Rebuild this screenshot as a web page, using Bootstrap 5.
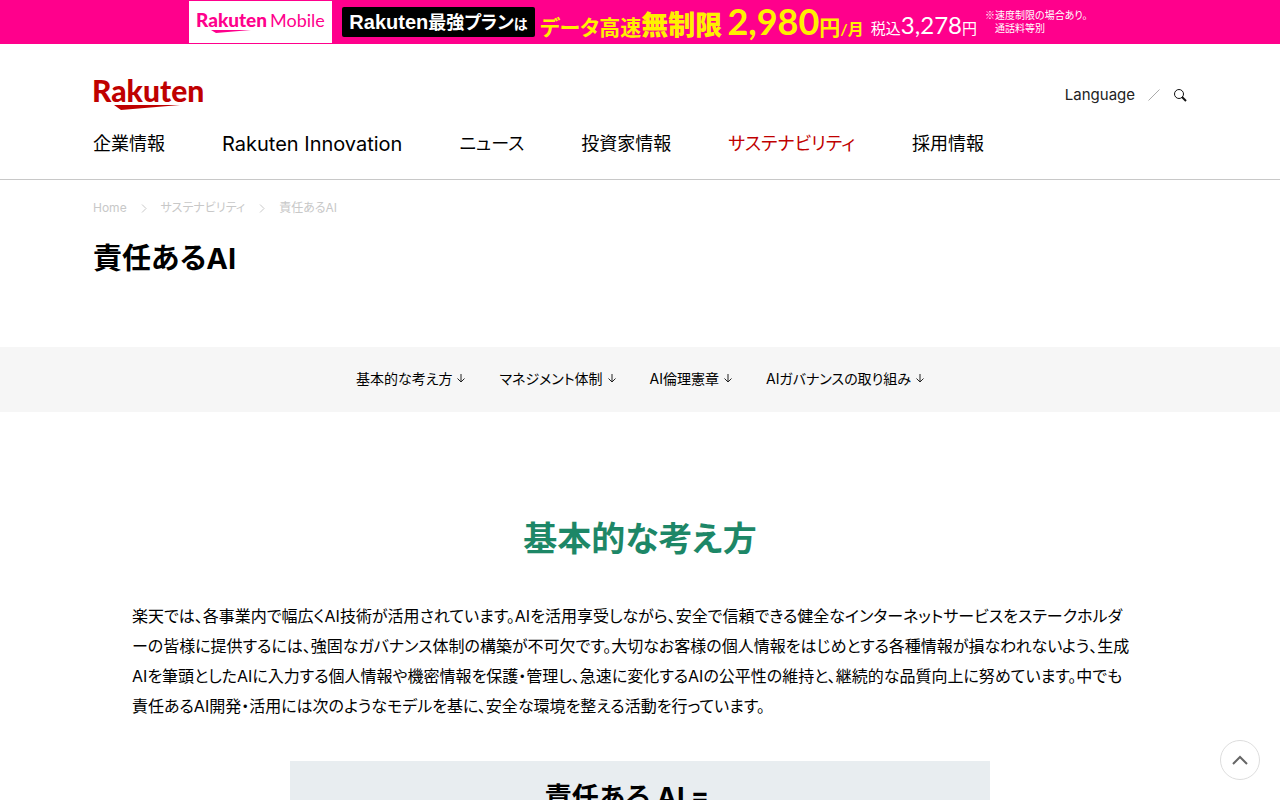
<!DOCTYPE html>
<html lang="ja">
<head>
<meta charset="utf-8">
<meta name="viewport" content="width=device-width, initial-scale=1">
<title>責任あるAI</title>
<link href="https://cdn.jsdelivr.net/npm/bootstrap@5.3.0/dist/css/bootstrap.min.css" rel="stylesheet">
<style>
body{font-family:"Inter","Noto Sans CJK JP",sans-serif;color:#000;background:#fff;font-feature-settings:"palt"}
a{color:inherit;text-decoration:none}
.promo{background:#ff008c;height:44px;color:#fff;line-height:1;white-space:nowrap;overflow:hidden;font-family:"Lato","Noto Sans CJK JP",sans-serif}
.promo-in{width:902px;height:44px}
.promo-logo{width:143px;height:42px;background:#fff;flex:none}
.promo-plan{background:#000;border-radius:2px;width:193px;height:30px;font-weight:700;font-size:18px;line-height:30px;flex:none;margin:0 5px 0 10px}
.promo-plan b{font-size:20px;font-family:"Liberation Sans",sans-serif}
.promo-plan .t14{font-size:14px}
.promo-text{height:44px;line-height:42px}
.yel{color:#fff000;font-weight:700}
.t16{font-size:16px}.t21{font-size:21px}.t27{font-size:27px;font-weight:900}.t36{font-size:36px}.t24{font-size:24px}
.promo-text.t16{font-size:15px;line-height:50px;margin-left:7px}
.promo-note{font-size:10px;line-height:13px}
.wrap{max-width:1280px;padding:0 93px;margin:0 auto}
.site-head{min-height:136px;border-bottom:1px solid #c8c8c8;padding-top:34px}
.tools{font-size:15px;line-height:22px;color:#222}
.tools .slash{margin:0 13px}
.gnav{gap:57px;font-size:18px;line-height:28px;margin-top:18px}
.gnav .en{font-size:20px}
.current{color:#bf0000}
.crumbs{font-size:12px;line-height:18px;color:#c8c8c8;gap:14px;padding-top:19px}
.page-title{font-size:29px;line-height:40px;font-weight:700;margin:22px 0 68px}
.local{background:#f6f6f6;min-height:65px;gap:34px;font-size:14px;line-height:20px;padding-bottom:2px}
.local a{display:flex;align-items:center;gap:5px}
.section-title{font-size:34px;line-height:50px;font-weight:700;color:#1d8767;margin:102px 0 37px}
.copy{max-width:1016px;font-size:16px;line-height:30px;margin:0 auto 40px}
.model{max-width:700px;background:#e8edf0;min-height:79px;padding:18px 26px 0 0;font-size:27px;line-height:38px;font-weight:700}
.to-top{position:fixed;right:20px;bottom:20px;width:40px;height:40px;border:1px solid #ddd;border-radius:50%;background:#fff;padding:0}
</style>
</head>
<body>
<a href="#" class="promo d-flex justify-content-center">
<span class="promo-in d-flex align-items-center">
<span class="promo-logo d-flex align-items-center justify-content-center"><svg width="130" height="28" viewBox="0 0 130 28" fill="#ff008c"><text x="0" y="19" font-family="Lato" font-weight="900" font-size="19">Rakuten</text><text x="74" y="19" font-family="Lato" font-size="18">Mobile</text><path d="M15 22h40L20 25z"/></svg></span>
<span class="promo-plan text-center"><b>Rakuten</b>最強プラン<span class="t14">は</span></span>
<span class="promo-text yel t21">データ高速<span class="t27">無制限</span> <span class="t36">2,980</span>円<span class="t16">/月</span></span>
<span class="promo-text t16">税込<span class="t24">3,278</span>円</span>
<span class="promo-note ms-2">※速度制限の場合あり。<br>　通話料等別</span>
</span>
</a>
<header class="site-head">
<div class="wrap">
<div class="d-flex justify-content-between align-items-center">
<a href="#" aria-label="Rakuten"><svg class="d-block" width="120" height="34" viewBox="0 0 120 34" fill="#bf0000"><text x="-1" y="24" font-family="Lato" font-weight="900" font-size="30">Rakuten</text><path d="M21 27h66L28 32z"/></svg></a>
<div class="tools d-flex align-items-center"><a href="#">Language</a>
<svg class="slash" width="12" height="12" viewBox="0 0 12 12" fill="none" stroke="#aaa"><path d="M.5 11.5l11-11"/></svg>
<a href="#" aria-label="検索"><svg class="d-block" width="14" height="14" viewBox="0 0 14 14" fill="none" stroke="#111"><circle cx="6" cy="6" r="4.5"/><path d="M9 9l4 4" stroke-width="2"/></svg></a></div>
</div>
<nav class="gnav d-flex align-items-center"><a href="#">企業情報</a><a class="en" href="#">Rakuten Innovation</a><a href="#">ニュース</a><a href="#">投資家情報</a><a href="#" class="current">サステナビリティ</a><a href="#">採用情報</a></nav>
</div>
</header>
<main>
<div class="wrap">
<nav class="crumbs d-flex align-items-center"><a href="#">Home</a><svg width="6" height="9" viewBox="0 0 6 9" fill="none" stroke="#c8c8c8"><path d="M1 .5l4 4-4 4"/></svg><a href="#">サステナビリティ</a><svg width="6" height="9" viewBox="0 0 6 9" fill="none" stroke="#c8c8c8"><path d="M1 .5l4 4-4 4"/></svg><span>責任あるAI</span></nav>
<h1 class="page-title">責任あるAI</h1>
</div>
<nav class="local d-flex justify-content-center align-items-center">
<a href="#policy">基本的な考え方<svg width="8" height="9" viewBox="0 0 8 9" fill="none" stroke="#222"><path d="M4 0v8M.5 4.5L4 8l3.5-3.5"/></svg></a>
<a href="#">マネジメント体制<svg width="8" height="9" viewBox="0 0 8 9" fill="none" stroke="#222"><path d="M4 0v8M.5 4.5L4 8l3.5-3.5"/></svg></a>
<a href="#">AI倫理憲章<svg width="8" height="9" viewBox="0 0 8 9" fill="none" stroke="#222"><path d="M4 0v8M.5 4.5L4 8l3.5-3.5"/></svg></a>
<a href="#">AIガバナンスの取り組み<svg width="8" height="9" viewBox="0 0 8 9" fill="none" stroke="#222"><path d="M4 0v8M.5 4.5L4 8l3.5-3.5"/></svg></a>
</nav>
<section id="policy">
<h2 class="section-title text-center">基本的な考え方</h2>
<p class="copy">楽天では、各事業内で幅広くAI技術が活用されています。AIを活用享受しながら、安全で信頼できる健全なインターネットサービスをステークホルダ<br>ーの皆様に提供するには、強固なガバナンス体制の構築が不可欠です。大切なお客様の個人情報をはじめとする各種情報が損なわれないよう、生成<br>AIを筆頭としたAIに入力する個人情報や機密情報を保護・管理し、急速に変化するAIの公平性の維持と、継続的な品質向上に努めています。中でも<br>責任あるAI開発・活用には次のようなモデルを基に、安全な環境を整える活動を行っています。</p>
<div class="model mx-auto text-center">責任ある AI =</div>
</section>
</main>
<button class="to-top d-flex align-items-center justify-content-center" aria-label="ページの先頭へ"><svg width="16" height="10" viewBox="0 0 16 10" fill="none" stroke="#666" stroke-width="2"><path d="M1 9l7-7 7 7"/></svg></button>
<script src="https://cdn.jsdelivr.net/npm/bootstrap@5.3.0/dist/js/bootstrap.bundle.min.js"></script>
</body>
</html>
